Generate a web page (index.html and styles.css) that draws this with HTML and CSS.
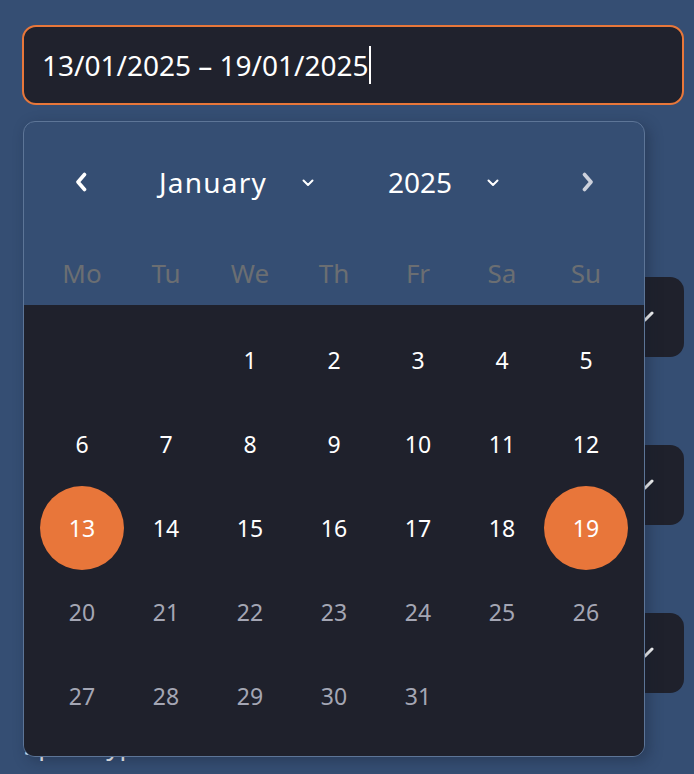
FILE: index.html
```html
<!DOCTYPE html>
<html lang="en">
<head>
<meta charset="utf-8">
<title>Date range picker</title>
<link rel="stylesheet" href="styles.css">
</head>
<body>
<div class="page">
  <div class="date-input"><span class="value">13/01/2025 – 19/01/2025</span><span class="caret"></span></div>

  <div class="fields">
    <div class="field">
      <div class="label"></div>
      <div class="select" aria-label="Team"><svg class="sel-chev" viewBox="0 0 20 12" width="20" height="12"><path d="M3 2 L10 9 L17 2" fill="none" stroke="#fff" stroke-width="3" stroke-linecap="round" stroke-linejoin="round"/></svg></div>
    </div>
    <div class="field">
      <div class="label"></div>
      <div class="select" aria-label="Location"><svg class="sel-chev" viewBox="0 0 20 12" width="20" height="12"><path d="M3 2 L10 9 L17 2" fill="none" stroke="#fff" stroke-width="3" stroke-linecap="round" stroke-linejoin="round"/></svg></div>
    </div>
    <div class="field">
      <div class="label"></div>
      <div class="select" aria-label="Category"><svg class="sel-chev" viewBox="0 0 20 12" width="20" height="12"><path d="M3 2 L10 9 L17 2" fill="none" stroke="#fff" stroke-width="3" stroke-linecap="round" stroke-linejoin="round"/></svg></div>
    </div>
    <div class="field">
      <div class="label">Sport type</div>
    </div>
  </div>

  <div class="popup">
    <div class="head">
      <div class="nav">
        <button class="arrow prev" aria-label="Previous month">
          <svg viewBox="0 0 14 20" width="14" height="20"><path d="M10.5 2.5 L4 10 L10.5 17.5" fill="none" stroke="#fff" stroke-width="3.6" stroke-linecap="round" stroke-linejoin="round"/></svg>
        </button>
        <div class="sel month"><span>January</span>
          <svg viewBox="0 0 12 8" width="12" height="8"><path d="M1.5 1.5 L6 6 L10.5 1.5" fill="none" stroke="#fff" stroke-width="2" stroke-linecap="round" stroke-linejoin="round"/></svg>
        </div>
        <div class="sel year"><span>2025</span>
          <svg viewBox="0 0 12 8" width="12" height="8"><path d="M1.5 1.5 L6 6 L10.5 1.5" fill="none" stroke="#fff" stroke-width="2" stroke-linecap="round" stroke-linejoin="round"/></svg>
        </div>
        <button class="arrow next" aria-label="Next month">
          <svg viewBox="0 0 14 20" width="14" height="20"><path d="M3.5 2.5 L10 10 L3.5 17.5" fill="none" stroke="#cdd1dc" stroke-width="3.6" stroke-linecap="round" stroke-linejoin="round"/></svg>
        </button>
      </div>
      <div class="weekdays">
        <span>Mo</span><span>Tu</span><span>We</span><span>Th</span><span>Fr</span><span>Sa</span><span>Su</span>
      </div>
    </div>
    <div class="body">
      <div class="days">
        <span class="empty"></span><span class="empty"></span>
        <span class="d">1</span><span class="d">2</span><span class="d">3</span><span class="d">4</span><span class="d">5</span>
        <span class="d">6</span><span class="d">7</span><span class="d">8</span><span class="d">9</span><span class="d">10</span><span class="d">11</span><span class="d">12</span>
        <span class="d sel-day">13</span><span class="d">14</span><span class="d">15</span><span class="d">16</span><span class="d">17</span><span class="d">18</span><span class="d sel-day">19</span>
        <span class="d muted">20</span><span class="d muted">21</span><span class="d muted">22</span><span class="d muted">23</span><span class="d muted">24</span><span class="d muted">25</span><span class="d muted">26</span>
        <span class="d muted">27</span><span class="d muted">28</span><span class="d muted">29</span><span class="d muted">30</span><span class="d muted">31</span>
      </div>
    </div>
  </div>
</div>
</body>
</html>
```

FILE: styles.css
```css
* { box-sizing: border-box; }

html, body {
  margin: 0;
  padding: 0;
  background: #354e73;
  height: 100%;
  overflow: hidden;
}

body {
  font-family: "Noto Sans", "Open Sans", sans-serif;
  color: #ffffff;
}

.page {
  position: relative;
  padding: 25px 10px 0 22px;
}

.date-input {
  height: 80px;
  border: 2px solid #e8773a;
  border-radius: 14px;
  background: #20222d;
  display: flex;
  align-items: center;
  padding-left: 18px;
  font-size: 28px;
}

.date-input .caret {
  display: inline-block;
  width: 1.5px;
  height: 38px;
  background: #ffffff;
  margin-left: 1px;
}

.fields {
  padding-top: 108px;
  padding-left: 1px;
}

.field {
  margin-bottom: 24px;
}

.label {
  height: 64px;
  display: flex;
  align-items: center;
  font-size: 26px;
  padding-left: 1px;
}

.field:last-child .label {
  height: 46px;
  align-items: flex-end;
}

.select {
  height: 80px;
  background: #1f212c;
  border-radius: 14px;
  display: flex;
  align-items: center;
  justify-content: flex-end;
  padding-right: 29px;
}

.sel-chev { display: block; }

.popup {
  position: absolute;
  left: 23px;
  top: 121px;
  width: 622px;
  height: 636px;
  border: 1px solid #5d7597;
  border-radius: 12px;
  background: #354e73;
  overflow: hidden;
  box-shadow: 4px 4px 14px rgba(20, 28, 45, 0.35);
}

.head {
  height: 183px;
  padding: 30px 16px 0;
}

.nav {
  display: flex;
  height: 60px;
  align-items: center;
}

.arrow {
  width: 84px;
  height: 60px;
  border: 0;
  background: none;
  padding: 0;
  display: flex;
  align-items: center;
  justify-content: center;
  cursor: pointer;
}

.arrow.prev svg { margin-left: -2px; }
.arrow.next svg { margin-left: 4px; }

.sel {
  display: flex;
  align-items: center;
  justify-content: space-between;
  height: 60px;
  font-size: 28px;
}

.sel svg { display: block; margin-top: 2px; }

.sel.month {
  width: 196px;
  padding-left: 35px;
  padding-right: 6px;
  letter-spacing: 1.2px;
}

.sel.year {
  width: 224px;
  padding-left: 68px;
  padding-right: 45px;
}

.weekdays {
  display: grid;
  grid-template-columns: repeat(7, 84px);
  margin-top: 40px;
  height: 42px;
  align-items: center;
  font-size: 26px;
  color: #6b6e72;
}

.weekdays span { text-align: center; }

.body {
  height: 451px;
  background: #1f212c;
  padding: 13px 16px 18px;
}

.days {
  display: grid;
  grid-template-columns: repeat(7, 84px);
  grid-auto-rows: 84px;
}

.d {
  display: flex;
  align-items: center;
  justify-content: center;
  font-size: 23px;
  color: #ffffff;
  border-radius: 50%;
}

.d.muted { color: #a4a6b4; }

.d.sel-day {
  background: #e8763a;
  color: #ffffff;
}
```
